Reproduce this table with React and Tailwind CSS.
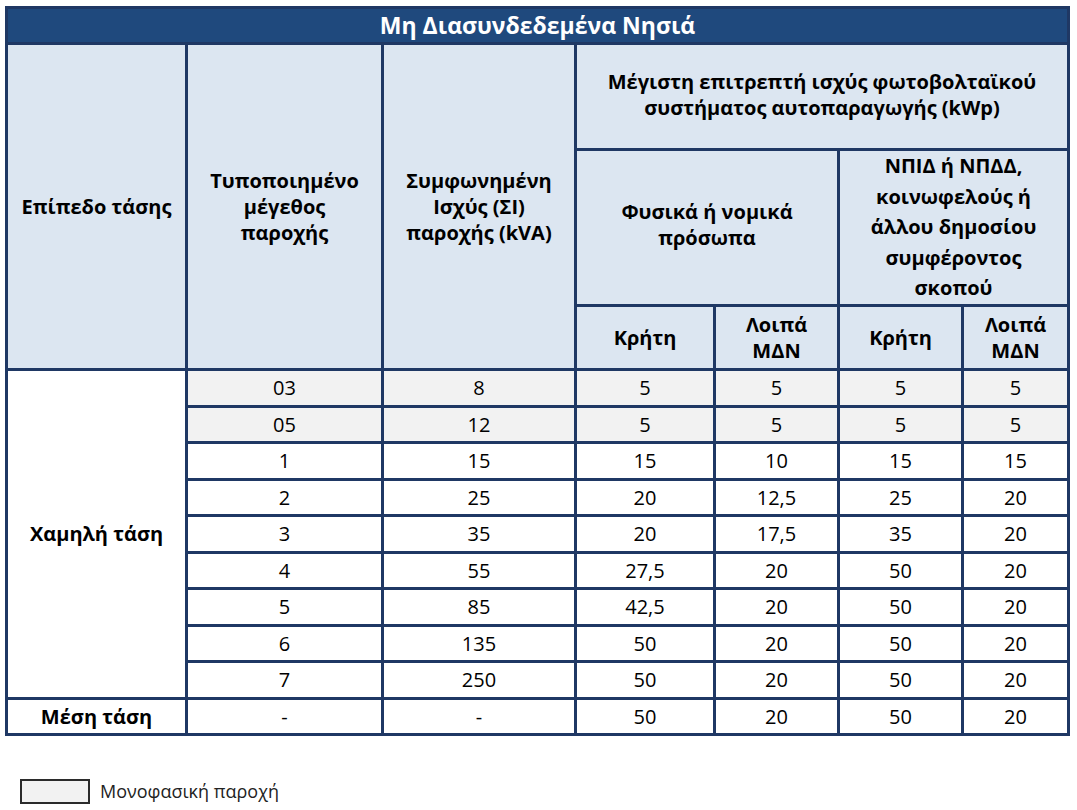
import React from "react";

const rows = [
  { size: "03", si: "8", vals: ["5", "5", "5", "5"], mono: true },
  { size: "05", si: "12", vals: ["5", "5", "5", "5"], mono: true },
  { size: "1", si: "15", vals: ["15", "10", "15", "15"] },
  { size: "2", si: "25", vals: ["20", "12,5", "25", "20"] },
  { size: "3", si: "35", vals: ["20", "17,5", "35", "20"] },
  { size: "4", si: "55", vals: ["27,5", "20", "50", "20"] },
  { size: "5", si: "85", vals: ["42,5", "20", "50", "20"] },
  { size: "6", si: "135", vals: ["50", "20", "50", "20"] },
  { size: "7", si: "250", vals: ["50", "20", "50", "20"] },
];

const head = "flex items-center justify-center bg-[#dce6f1] text-center text-[20px] font-bold leading-[26px]";
const cell = "flex items-center justify-center text-center";

export default function App() {
  return (
    <div className="min-h-[810px] bg-white pt-[6px] pl-[5px] text-[20px] text-black [font-family:'Open_Sans','Noto_Sans',sans-serif]">
      <div className="grid w-[1065px] grid-cols-[177px_193px_190px_136px_121px_121px_103px] grid-rows-[33px_103px_153px_61px_34px_33px_34px_33px_34px_33px_34px_33px_34px_33px] gap-[3px] bg-[#1f3864] p-[3px]">
        {/* title */}
        <div className="col-span-7 flex items-center justify-center bg-[#1f497d] text-[23px] font-bold text-white">
          Μη Διασυνδεδεμένα Νησιά
        </div>

        {/* header */}
        <div className={`${head} row-span-3`}>Επίπεδο τάσης</div>
        <div className={`${head} row-span-3`}>
          Τυποποιημένο
          <br />
          μέγεθος
          <br />
          παροχής
        </div>
        <div className={`${head} row-span-3`}>
          Συμφωνημένη
          <br />
          Ισχύς (ΣΙ)
          <br />
          παροχής (kVA)
        </div>
        <div className={`${head} col-span-4 pb-[4px]`}>
          Μέγιστη επιτρεπτή ισχύς φωτοβολταϊκού
          <br />
          συστήματος αυτοπαραγωγής (kWp)
        </div>
        <div className={`${head} col-span-2 pb-[6px]`}>
          Φυσικά ή νομικά
          <br />
          πρόσωπα
        </div>
        <div className={`${head} col-span-2 leading-[30.5px]`}>
          ΝΠΙΔ ή ΝΠΔΔ,
          <br />
          κοινωφελούς ή
          <br />
          άλλου δημοσίου
          <br />
          συμφέροντος
          <br />
          σκοπού
        </div>
        <div className={head}>Κρήτη</div>
        <div className={`${head} leading-[24px]`}>
          Λοιπά
          <br />
          ΜΔΝ
        </div>
        <div className={head}>Κρήτη</div>
        <div className={`${head} leading-[24px]`}>
          Λοιπά
          <br />
          ΜΔΝ
        </div>

        {/* body */}
        <div className="row-span-9 flex items-center justify-center bg-white font-bold">Χαμηλή τάση</div>
        {rows.map((r) => {
          const bg = r.mono ? "bg-[#f2f2f2]" : "bg-white";
          return (
            <React.Fragment key={r.size}>
              <div className={`${cell} ${bg}`}>{r.size}</div>
              <div className={`${cell} ${bg}`}>{r.si}</div>
              {r.vals.map((v, i) => (
                <div key={i} className={`${cell} ${bg}`}>
                  {v}
                </div>
              ))}
            </React.Fragment>
          );
        })}
        <div className="flex items-center justify-center bg-white font-bold">Μέση τάση</div>
        <div className={`${cell} bg-white`}>-</div>
        <div className={`${cell} bg-white`}>-</div>
        <div className={`${cell} bg-white`}>50</div>
        <div className={`${cell} bg-white`}>20</div>
        <div className={`${cell} bg-white`}>50</div>
        <div className={`${cell} bg-white`}>20</div>
      </div>

      {/* legend */}
      <div className="mt-[42px] ml-[15px] flex items-center gap-[10px]">
        <div className="h-[25px] w-[70px] border-2 border-[#2b2b2b] bg-[#f2f2f2]" />
        <span className="text-[18px] text-[#222]">Μονοφασική παροχή</span>
      </div>
    </div>
  );
}
